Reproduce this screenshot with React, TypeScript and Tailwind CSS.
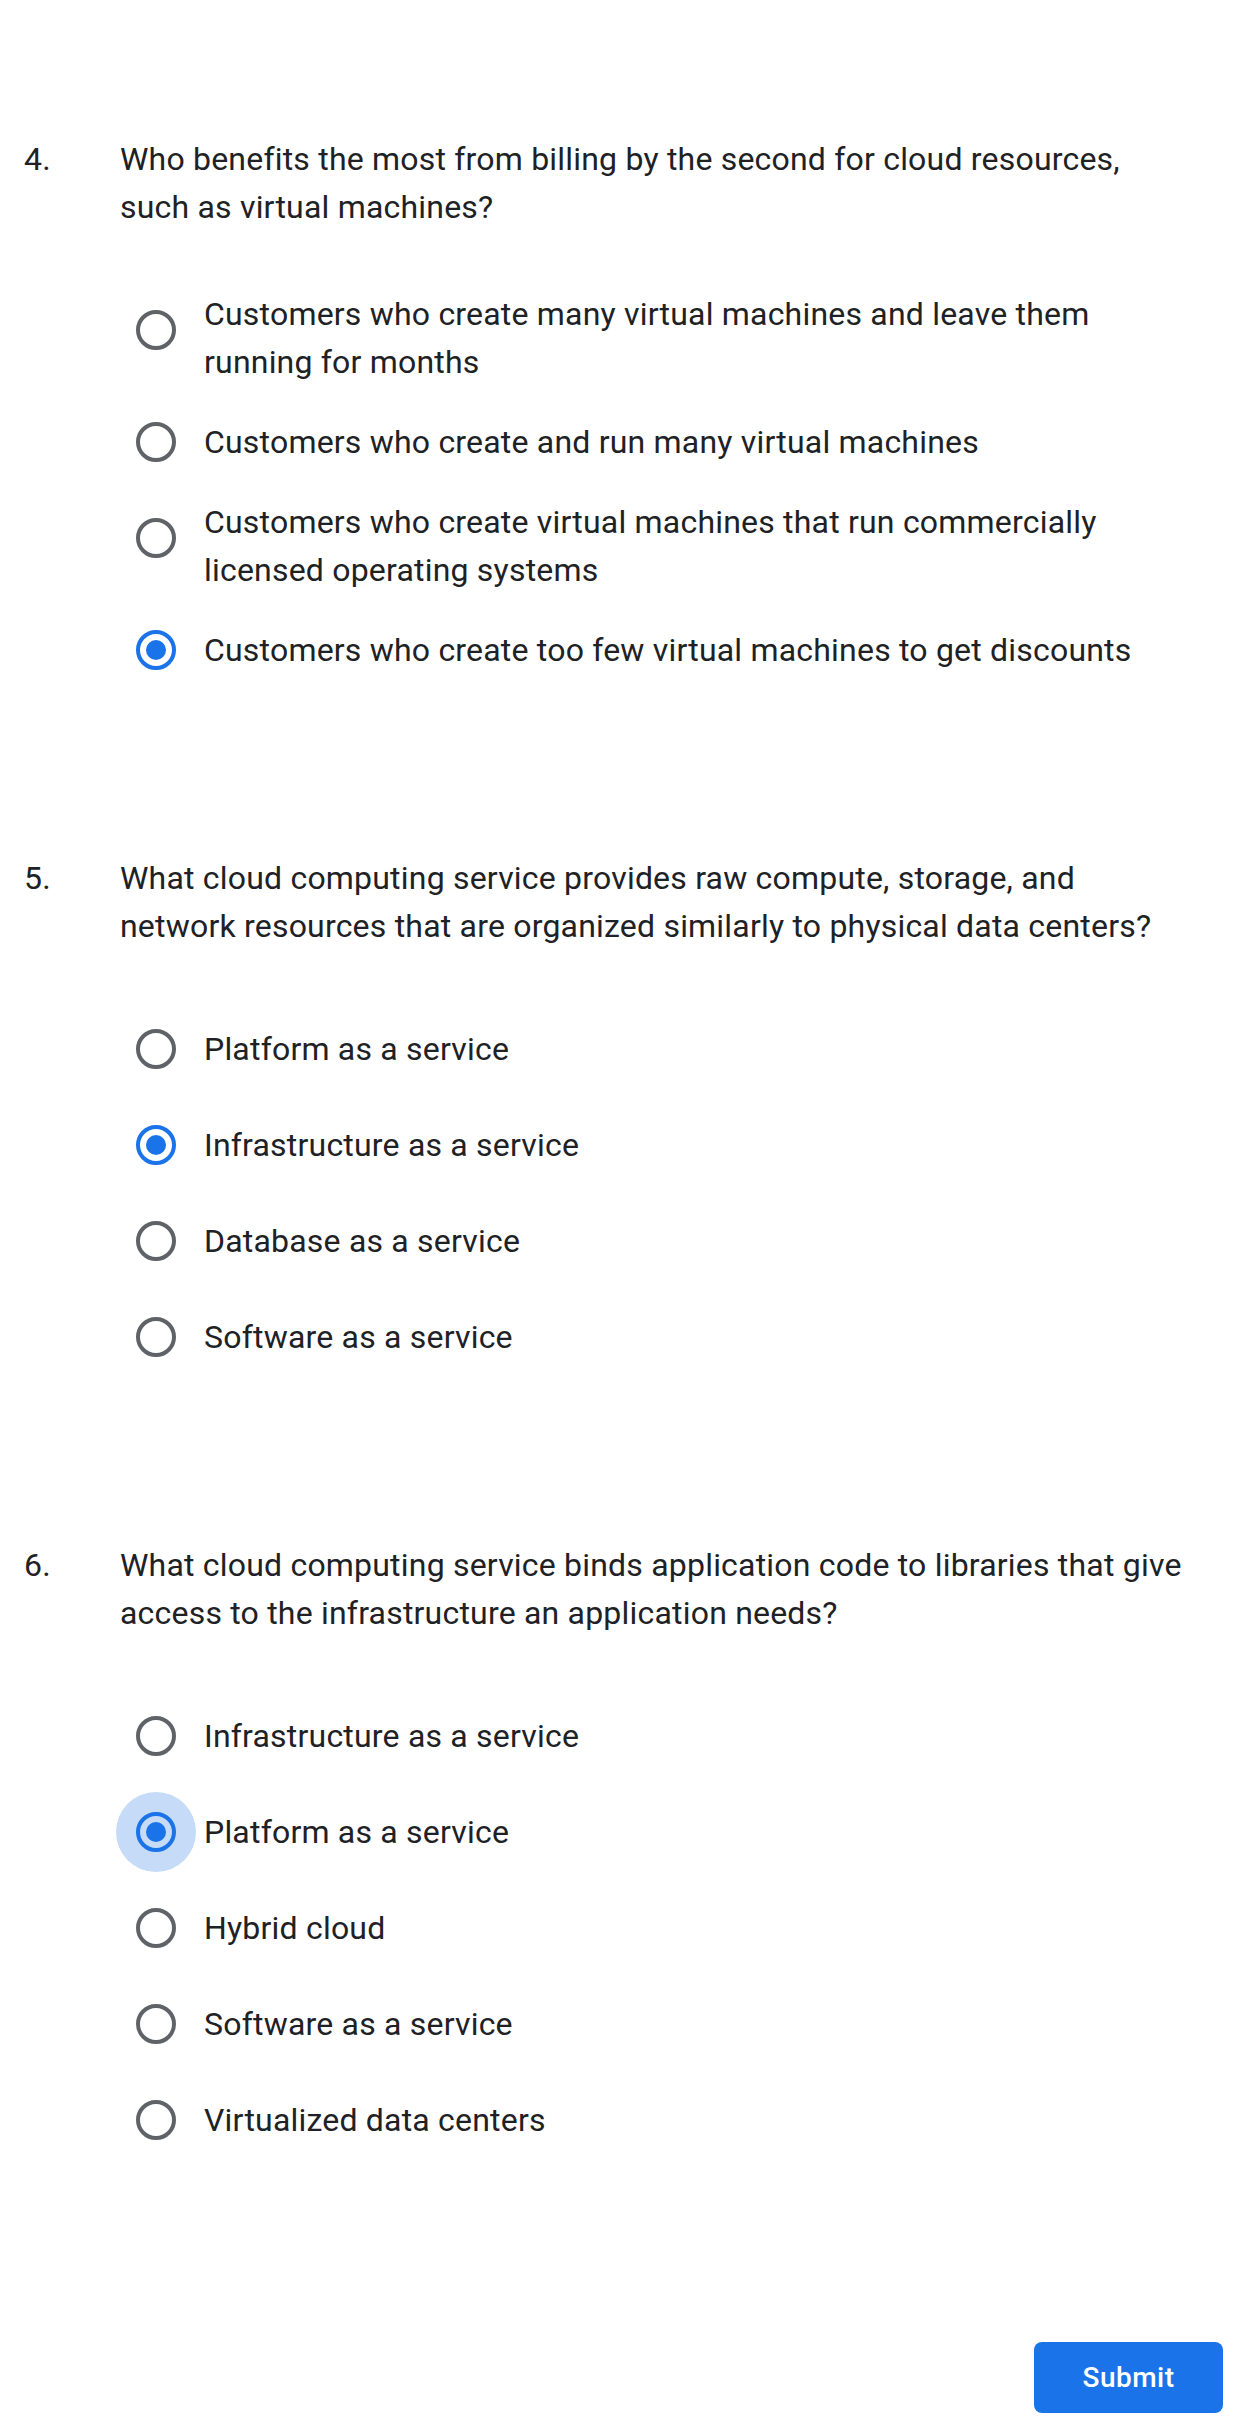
import React from 'react';

type Option = {
  label: string;
  checked?: boolean;
  focused?: boolean;
  wraps?: boolean;
};

type Question = {
  num: number;
  title: string;
  options: Option[];
};

const questions: Question[] = [
  {
    num: 4,
    title: 'Who benefits the most from billing by the second for cloud resources, such as virtual machines?',
    options: [
      { label: 'Customers who create many virtual machines and leave them running for months', wraps: true },
      { label: 'Customers who create and run many virtual machines' },
      { label: 'Customers who create virtual machines that run commercially licensed operating systems', wraps: true },
      { label: 'Customers who create too few virtual machines to get discounts', checked: true },
    ],
  },
  {
    num: 5,
    title: 'What cloud computing service provides raw compute, storage, and network resources that are organized similarly to physical data centers?',
    options: [
      { label: 'Platform as a service' },
      { label: 'Infrastructure as a service', checked: true },
      { label: 'Database as a service' },
      { label: 'Software as a service' },
    ],
  },
  {
    num: 6,
    title: 'What cloud computing service binds application code to libraries that give access to the infrastructure an application needs?',
    options: [
      { label: 'Infrastructure as a service' },
      { label: 'Platform as a service', checked: true, focused: true },
      { label: 'Hybrid cloud' },
      { label: 'Software as a service' },
      { label: 'Virtualized data centers' },
    ],
  },
];

// Radio circle with optional focus halo
function Radio({ checked, focused }: { checked?: boolean; focused?: boolean }) {
  return (
    <div
      className={
        'w-20 h-20 shrink-0 rounded-full flex items-center justify-center ' +
        (focused ? 'bg-[#c6dbf7]' : '')
      }
    >
      {checked ? (
        <div className="w-10 h-10 rounded-full border-4 border-[#1a73e8] flex items-center justify-center">
          <div className="w-5 h-5 rounded-full bg-[#1a73e8]" />
        </div>
      ) : (
        <div className="w-10 h-10 rounded-full border-4 border-[#5f6368]" />
      )}
    </div>
  );
}

function OptionRow({ option }: { option: Option }) {
  return (
    <label className="flex items-start cursor-pointer">
      <Radio checked={option.checked} focused={option.focused} />
      <span
        className={
          'ml-2 w-[981px] text-[32px] leading-[48px] tracking-[0.2px] text-[#202124] ' +
          (option.wraps ? 'mt-0' : 'mt-4')
        }
      >
        {option.label}
      </span>
    </label>
  );
}

function QuestionBlock({ q, first }: { q: Question; first?: boolean }) {
  return (
    <section className={first ? '' : 'mt-[164px]'}>
      <div className="flex text-[32px] leading-[48px] tracking-[0.2px] text-[#202124]">
        <div className="w-24 shrink-0">{q.num}.</div>
        <div className="w-[1075px]">{q.title}</div>
      </div>
      <div className="mt-[59px] ml-[92px] flex flex-col gap-4">
        {q.options.map((o) => (
          <OptionRow key={o.label} option={o} />
        ))}
      </div>
    </section>
  );
}

export default function App() {
  return (
    <div className="min-h-[2423px] w-full bg-white font-['Roboto',sans-serif]">
      <main className="pt-[135px] pl-6 pr-[22px] pb-[11px]">
        {questions.map((q, i) => (
          <QuestionBlock key={q.num} q={q} first={i === 0} />
        ))}
        <div className="mt-[182px] flex justify-end">
          <button className="w-[189px] h-[71px] rounded-lg bg-[#1a73e8] text-white text-[28px] font-medium tracking-[0.5px]">
            Submit
          </button>
        </div>
      </main>
    </div>
  );
}
